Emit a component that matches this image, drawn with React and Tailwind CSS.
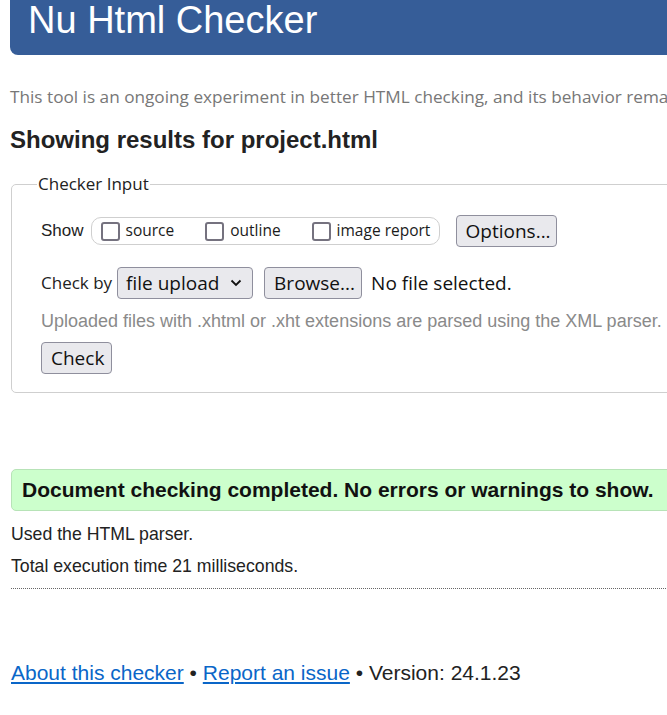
import React from 'react';

const ui = { fontFamily: '"Open Sans", "Noto Sans", sans-serif' };
const arial = { fontFamily: '"Liberation Sans", Arial, sans-serif' };

const Box = ({ label }) => (
  <label className="flex items-center gap-[6px]">
    <span className="w-[19px] h-[19px] border-2 border-[#75727f] rounded-[3px] bg-white" />
    <span className="text-[15.5px] text-[#1b1b1b]">{label}</span>
  </label>
);

const Btn = ({ children, className = '' }) => (
  <button
    className={`h-[32px] px-[9px] bg-[#e9e9ed] border border-[#8f8f9d] rounded-[4px] text-[19px] text-[#111] leading-none ${className}`}
    style={ui}
  >
    {children}
  </button>
);

export default function App() {
  return (
    <div className="w-[667px] h-[715px] overflow-hidden bg-white" style={arial}>
      <div className="w-[760px] pl-[10px]">
        <header className="h-[55px] bg-[#365d98] rounded-bl-[8px] pl-[18px] pt-[1px]">
          <h1 className="text-[38px] leading-[38px] text-white">Nu Html Checker</h1>
        </header>

        <p className="mt-[30px] text-[17.2px] leading-[24px] text-[#777] whitespace-nowrap" style={ui}>
          This tool is an ongoing experiment in better HTML checking, and its behavior rema
        </p>

        <h2 className="mt-[17px] text-[24px] leading-[28px] font-bold text-[#222]">
          Showing results for project.html
        </h2>

        <fieldset className="mt-[19px] ml-[1px] border border-[#cfcfcf] rounded-[5px] pb-[18px]">
          <legend className="ml-[25px] px-[1px] text-[17px] leading-[22px] text-[#222]" style={ui}>
            Checker Input
          </legend>
          <div className="pl-[29px]">
            <div className="flex items-center mt-[20px] h-[32px]">
              <span className="text-[17px] text-[#222] mr-[7px]">Show</span>
              <div className="flex items-center h-[28px] w-[349px] border border-[#cfcfcf] rounded-[10px] pl-[9px] gap-[31px]" style={ui}>
                <Box label="source" />
                <Box label="outline" />
                <Box label="image report" />
              </div>
              <Btn className="ml-[16px] w-[101px]">Options...</Btn>
            </div>

            <div className="flex items-center mt-[20px] h-[32px]">
              <span className="text-[17px] text-[#222] mr-[5px]" style={ui}>Check by</span>
              <div
                className="h-[32px] w-[136px] flex items-center justify-between pl-[8px] pr-[10px] bg-[#e9e9ed] border border-[#8f8f9d] rounded-[4px] text-[19px] text-[#111]"
                style={ui}
              >
                <span>file upload</span>
                <svg width="12" height="8" viewBox="0 0 12 8" fill="none" stroke="#111" strokeWidth="1.8">
                  <path d="M1.5 1.5 6 6l4.5-4.5" />
                </svg>
              </div>
              <Btn className="ml-[11px] w-[98px]">Browse...</Btn>
              <span className="ml-[9px] text-[19px] text-[#111]" style={ui}>No file selected.</span>
            </div>

            <p className="mt-[10px] text-[18px] leading-[24px] text-[#8a8a8a] whitespace-nowrap">
              Uploaded files with .xhtml or .xht extensions are parsed using the XML parser.
            </p>

            <Btn className="mt-[9px] h-[30px] w-[71px] px-[8px]">Check</Btn>
          </div>
        </fieldset>

        <div className="mt-[76px] ml-[1px] h-[42px] flex items-center pl-[10px] bg-[#ccffcc] border border-[#b7e3b7] rounded-[5px]">
          <span className="text-[21px] font-bold text-[#111]">
            Document checking completed. No errors or warnings to show.
          </span>
        </div>

        <p className="mt-[13px] ml-[1px] text-[17.7px] leading-[20px] text-[#222]">Used the HTML parser.</p>
        <p className="mt-[12px] ml-[1px] text-[17.7px] leading-[20px] text-[#222]">Total execution time 21 milliseconds.</p>
        <div className="mt-[12px] ml-[1px] border-t border-dotted border-[#666]" />

        <p className="mt-[72px] ml-[1px] text-[21px] leading-[24px] text-[#222]">
          <a href="#" className="text-[#0a66c8] underline">About this checker</a>
          {' • '}
          <a href="#" className="text-[#0a66c8] underline">Report an issue</a>
          {' • Version: 24.1.23'}
        </p>
      </div>
    </div>
  );
}
